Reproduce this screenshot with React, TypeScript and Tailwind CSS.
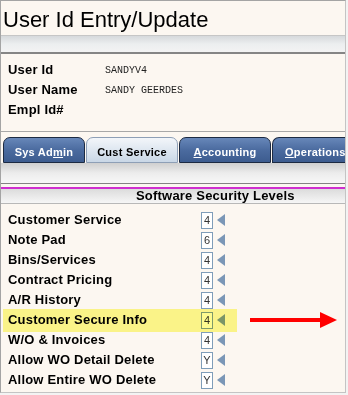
const rows = [
  { label: 'Customer Service', value: '4' },
  { label: 'Note Pad', value: '6' },
  { label: 'Bins/Services', value: '4' },
  { label: 'Contract Pricing', value: '4' },
  { label: 'A/R History', value: '4' },
  { label: 'Customer Secure Info', value: '4', marked: true },
  { label: 'W/O & Invoices', value: '4' },
  { label: 'Allow WO Detail Delete', value: 'Y' },
  { label: 'Allow Entire WO Delete', value: 'Y' },
]

function Tab({ children, active, w }: { children: React.ReactNode; active?: boolean; w: string }) {
  return (
    <div
      className={
        'h-[26px] shrink-0 rounded-t-[7px] border flex items-center pt-[4px] text-[11px] font-bold tracking-[0.25px] ' +
        w +
        (active
          ? ' border-[#8e9fb6] bg-gradient-to-b from-[#f3f6fa] to-[#c9d7e6] text-black'
          : ' border-[#1c2a42] bg-gradient-to-b from-[#6787b9] via-[#4b6b9f] to-[#3d5c8f] text-white')
      }
    >
      {children}
    </div>
  )
}

function Arrow() {
  return (
    <svg width="88" height="18" viewBox="0 0 88 18" className="shrink-0">
      <rect x="0" y="7" width="72" height="4" fill="#ff0000" />
      <polygon points="70,1 87,9 70,17" fill="#ff0000" />
    </svg>
  )
}

export default function App() {
  return (
    <div className="w-[348px] h-[395px] bg-[#f3f3f3]">
      <div className="w-[346px] h-[393px] border border-[#a4a4a4] border-r-[#c4c4c4] border-b-[#c4c4c4] bg-[#fcf7f1] overflow-hidden font-['Liberation_Sans',Arial,sans-serif] text-black">
        <div className="h-[34px] pl-[2px] pt-[5px] text-[22px] leading-[28px]">User Id Entry/Update</div>
        <div className="h-[19px] border-t border-[#c6c6c6] border-b-2 border-b-[#858585] bg-gradient-to-b from-[#d6d9dc] via-[#eceeef] to-[#f3f3f3]" />

        <div className="h-[78px] pt-[6px] pl-[7px] border-b border-[#a8a8a8]">
          {[
            ['User Id', 'SANDYV4'],
            ['User Name', 'SANDY GEERDES'],
            ['Empl Id#', ''],
          ].map(([k, v]) => (
            <div key={k} className="h-[20px] flex items-center">
              <div className="w-[97px] text-[13px] font-bold tracking-[0.2px]">{k}</div>
              <div className="font-['Liberation_Mono',monospace] text-[10px] text-[#222]">{v}</div>
            </div>
          ))}
        </div>

        <div className="pt-[5px] pl-[2px] flex gap-[1px]">
          <Tab w="w-[82px] justify-center">
            Sys Ad<span className="underline">m</span>in
          </Tab>
          <Tab w="w-[92px] justify-center" active>
            Cust Service
          </Tab>
          <Tab w="w-[92px] justify-center">
            <span className="underline">A</span>ccounting
          </Tab>
          <Tab w="w-[74px] pl-[12px] rounded-tr-none border-r-0">
            <span className="underline">O</span>perations
          </Tab>
        </div>
        <div className="h-[21px] border-b border-[#838383] bg-gradient-to-b from-[#cfcfcf] via-[#ececec] to-[#f7f7f7]" />
        <div className="h-[3px]" />
        <div className="h-[2px] bg-[#cf2fcf]" />
        <div className="h-[15px] border-b border-[#b8b8b8] bg-gradient-to-b from-[#dcdcdc] to-[#f6f6f6] pl-[135px] text-[13px] font-bold leading-[14px] tracking-[0.2px]">
          Software Security Levels
        </div>

        <div className="pt-[6px]">
          {rows.map((r) => (
            <div key={r.label} className="h-[20px] flex items-center">
              <div className="relative ml-[2px] w-[234px] h-[20px] flex items-center pl-[5px]">
                <div className="w-[193px] text-[13px] font-bold tracking-[0.2px]">{r.label}</div>
                <div className="w-[12px] h-[17px] border border-[#7f9db9] bg-white flex items-center justify-center text-[11px] leading-none text-[#333]">
                  {r.value}
                </div>
                <svg width="8" height="12" viewBox="0 0 8 12" className="ml-[4px]">
                  <polygon points="8,0 0,6 8,12" fill="#7b97b7" />
                </svg>
                {r.marked && (
                  <div className="absolute left-0 right-0 -top-px -bottom-[2px] bg-[#fdfb90] mix-blend-multiply" />
                )}
              </div>
              {r.marked && (
                <div className="ml-[13px]">
                  <Arrow />
                </div>
              )}
            </div>
          ))}
        </div>
      </div>
    </div>
  )
}
